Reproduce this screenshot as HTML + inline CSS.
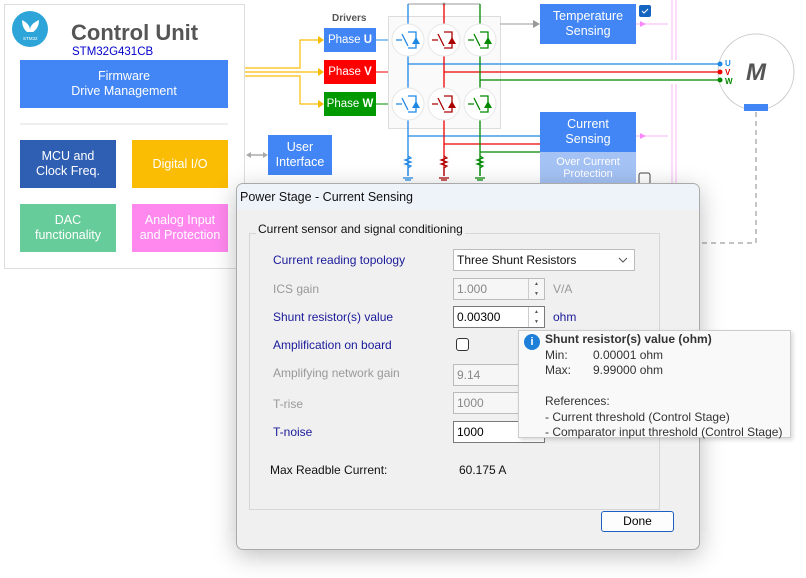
<!DOCTYPE html>
<html><head><meta charset="utf-8"><style>
*{margin:0;padding:0;box-sizing:border-box}
body{width:806px;height:578px;overflow:hidden;background:#fff;font-family:"Liberation Sans",sans-serif;position:relative}
.a{position:absolute}
.bx{position:absolute;color:#fff;display:flex;align-items:center;justify-content:center;text-align:center;font-size:12.5px;line-height:15px}
.lbl{position:absolute;font-size:12px;color:#1a1a9a}
.dis{color:#999}
.in{position:absolute;background:#fff;border:1px solid #7a7a7a;font-size:12px;padding:3px 3px;height:22px}
.in.d{border-color:#bbb;color:#888;background:#f6f6f6}
.sp{position:absolute;right:0;top:0;width:16px;height:20px;border-left:1px solid #ccc;font-size:5px;color:#555;text-align:center;line-height:10px}
</style></head><body>
<svg class="a" style="left:0;top:0" width="806" height="578">
<rect x="4.5" y="4.5" width="240" height="264" fill="#fff" stroke="#ddd"/>
<line x1="20" y1="124" x2="228" y2="124" stroke="#ddd"/>
<circle cx="30" cy="29" r="18" fill="#2ea5d9"/>
<path d="M22 20 q8 4 8 10 q0 -6 9 -10 q0 8 -6 12 h-6 q-5 -4 -5 -12z" fill="#fff"/>
<text x="23" y="40" font-size="4.5" fill="#fff" font-family="Liberation Sans">STM32</text>
<g stroke="#fbbc04" stroke-width="1.2" fill="none">
<path d="M245 68 H300 V40 H318"/><path d="M245 72 H318"/><path d="M245 76 H300 V104 H318"/>
</g>
<path d="M318 36 l6 4 l-6 4z M318 68 l6 4 l-6 4z M318 100 l6 4 l-6 4z" fill="#fbbc04"/>
<path d="M249 155 H265" stroke="#aaa" stroke-width="1.5"/><path d="M246 155 l5 -3 v6z M268 155 l-5 -3 v6z" fill="#aaa"/>
<line x1="376" y1="40" x2="390" y2="40" stroke="#1e88e5"/>
<line x1="376" y1="72" x2="390" y2="72" stroke="#e00"/>
<line x1="376" y1="104" x2="390" y2="104" stroke="#080"/>
<rect x="388.5" y="16.5" width="112" height="112" fill="#fafafa" stroke="#ddd"/>
<path d="M408 4 H480 M444 4 V4" stroke="#999"/>
<circle cx="444" cy="4" r="1.5" fill="#999"/>
<path d="M500 24 H533" stroke="#999"/><path d="M533 20 l7 4 l-7 4z" fill="#999"/>
<g stroke-width="1.3" fill="none">
<path d="M408 4 V176 M408 64 H720 M408 136 H540" stroke="#1e88e5"/>
<path d="M444 4 V176 M444 72 H720 M444 144 H540" stroke="#e00"/>
<path d="M480 4 V176 M480 80 H720 M480 152 H540" stroke="#080"/>
</g>
<g fill="#fff" stroke="#e6e6e6">
<circle cx="408" cy="40" r="16"/><circle cx="444" cy="40" r="16"/><circle cx="480" cy="40" r="16"/>
<circle cx="408" cy="104" r="16"/><circle cx="444" cy="104" r="16"/><circle cx="480" cy="104" r="16"/>
</g>
<g fill="none" stroke-width="1.3">
<g stroke="#1e88e5"><path d="M396 40 h6 M402 34 l6 12 M408 32 h8 v16 h-8"/><path d="M396 104 h6 M402 98 l6 12 M408 96 h8 v16 h-8"/></g>
<g stroke="#a00"><path d="M432 40 h6 M438 34 l6 12 M444 32 h8 v16 h-8"/><path d="M432 104 h6 M438 98 l6 12 M444 96 h8 v16 h-8"/></g>
<g stroke="#080"><path d="M468 40 h6 M474 34 l6 12 M480 32 h8 v16 h-8"/><path d="M468 104 h6 M474 98 l6 12 M480 96 h8 v16 h-8"/></g>
</g>
<path d="M412 44 l4 -7 l4 7z M412 108 l4 -7 l4 7z" fill="#1e88e5"/>
<path d="M448 44 l4 -7 l4 7z M448 108 l4 -7 l4 7z" fill="#a00"/>
<path d="M484 44 l4 -7 l4 7z M484 108 l4 -7 l4 7z" fill="#080"/>
<g fill="none" stroke-width="1.2">
<path d="M408 156 l3 2 l-6 2 l6 2 l-6 2 l6 2 l-3 2 v8 M403 178 h10 M405 180 h6" stroke="#1e88e5"/>
<path d="M444 156 l3 2 l-6 2 l6 2 l-6 2 l6 2 l-3 2 v8 M439 178 h10 M441 180 h6" stroke="#a00"/>
<path d="M480 156 l3 2 l-6 2 l6 2 l-6 2 l6 2 l-3 2 v8 M475 178 h10 M477 180 h6" stroke="#080"/>
</g>
<g stroke="#fbc4f4" stroke-width="1.2" fill="none">
<path d="M672 0 V60 M676 0 V60 M672 84 V190 M676 84 V190 M636 24 H668 M636 136 H668"/>
</g>
<path d="M640 21 l6 3 l-6 3z M640 133 l6 3 l-6 3z" fill="#f8f"/>
<circle cx="756" cy="72" r="38" fill="#fff" stroke="#ccc"/>
<rect x="744" y="104" width="24" height="7" fill="#4285f4"/>
<text x="756" y="80" text-anchor="middle" font-size="24" font-weight="bold" fill="#555" font-style="italic">M</text>
<circle cx="720" cy="64" r="2.5" fill="#1e88e5"/><circle cx="720" cy="72" r="2.5" fill="#e00"/><circle cx="720" cy="80" r="2.5" fill="#080"/>
<text x="725" y="66" font-size="8" font-weight="bold" fill="#1e88e5">U</text>
<text x="725" y="75" font-size="8" font-weight="bold" fill="#e00">V</text>
<text x="725" y="84" font-size="8" font-weight="bold" fill="#080">W</text>
<path d="M756 112 V243 H700" stroke="#888" stroke-dasharray="5 4" fill="none"/>
<rect x="639" y="5" width="12" height="12" rx="2" fill="#1565c0"/><path d="M642 11 l2 2 l4 -4" stroke="#fff" fill="none"/>
<rect x="639" y="173" width="11" height="11" rx="2" fill="#fff" stroke="#444"/>
</svg>
<div class="a" style="left:71px;top:20px;font-size:22px;font-weight:bold;color:#555">Control Unit</div>
<div class="a" style="left:72px;top:46px;font-size:11.5px;color:#00c">STM32G431CB</div>
<div class="bx" style="left:20px;top:60px;width:208px;height:48px;background:#4285f4">Firmware<br>Drive Management</div>
<div class="bx" style="left:20px;top:140px;width:96px;height:48px;background:#2f5fb3">MCU and<br>Clock Freq.</div>
<div class="bx" style="left:132px;top:140px;width:96px;height:48px;background:#fbbc04">Digital I/O</div>
<div class="bx" style="left:20px;top:204px;width:96px;height:48px;background:#66cc99">DAC<br>functionality</div>
<div class="bx" style="left:132px;top:204px;width:96px;height:48px;background:#ff88ee">Analog Input<br>and Protection</div>
<div class="bx" style="left:268px;top:135px;width:64px;height:40px;background:#4285f4">User<br>Interface</div>
<div class="a" style="left:332px;top:13px;font-size:10px;font-weight:bold;color:#555">Drivers</div>
<div class="bx" style="left:324px;top:28px;width:52px;height:24px;background:#4285f4;font-size:11.5px">Phase&nbsp;<b>U</b></div>
<div class="bx" style="left:324px;top:60px;width:52px;height:24px;background:#f00;font-size:11.5px">Phase&nbsp;<b>V</b></div>
<div class="bx" style="left:324px;top:92px;width:52px;height:24px;background:#090;font-size:11.5px">Phase&nbsp;<b>W</b></div>
<div class="bx" style="left:540px;top:4px;width:96px;height:40px;background:#4285f4">Temperature<br>Sensing</div>
<div class="bx" style="left:540px;top:112px;width:96px;height:40px;background:#4285f4">Current<br>Sensing</div>
<div class="bx" style="left:540px;top:152px;width:96px;height:32px;background:#a4c2f4;font-size:11px;line-height:12px">Over Current<br>Protection</div>

<div class="a" style="left:236px;top:183px;width:464px;height:367px;background:#f0f0f0;border:1px solid #aaa;border-radius:7px;box-shadow:0 6px 24px rgba(0,0,0,.25);overflow:hidden">
<div style="height:26px;background:#eef2f9;font-size:12.5px;padding:6px 3px;color:#111">Power Stage - Current Sensing</div>
</div>
<div class="a" style="left:249px;top:233px;width:411px;height:277px;border:1px solid #d6d6d6"></div>
<div class="a" style="left:256px;top:222px;font-size:12px;background:#f0f0f0;padding:0 2px;color:#111">Current sensor and signal conditioning</div>
<div class="lbl" style="left:273px;top:253px">Current reading topology</div>
<div class="lbl dis" style="left:273px;top:282px">ICS gain</div>
<div class="lbl" style="left:273px;top:310px">Shunt resistor(s) value</div>
<div class="lbl" style="left:273px;top:338px">Amplification on board</div>
<div class="lbl dis" style="left:273px;top:366px">Amplifying network gain</div>
<div class="lbl dis" style="left:273px;top:397px">T-rise</div>
<div class="lbl" style="left:273px;top:425px">T-noise</div>
<div class="a" style="left:270px;top:463px;font-size:12px;color:#111">Max Readble Current:</div>
<div class="a" style="left:459px;top:463px;font-size:12px;color:#111">60.175 A</div>
<div class="in" style="left:453px;top:249px;width:182px;border-color:#bbb;color:#111">Three Shunt Resistors<svg style="position:absolute;right:6px;top:7px" width="10" height="6"><path d="M1 1 L5 5 L9 1" stroke="#555" fill="none"/></svg></div>
<div class="in d" style="left:453px;top:278px;width:92px">1.000<div class="sp">▲<br>▼</div></div>
<div class="a" style="left:553px;top:282px;font-size:12px;color:#999">V/A</div>
<div class="in" style="left:453px;top:306px;width:92px">0.00300<div class="sp">▲<br>▼</div></div>
<div class="a" style="left:553px;top:310px;font-size:12px;color:#1a1a9a">ohm</div>
<div class="a" style="left:456px;top:338px;width:13px;height:13px;border:1px solid #333;border-radius:3px;background:#fff"></div>
<div class="in d" style="left:453px;top:364px;width:92px">9.14</div>
<div class="in d" style="left:453px;top:392px;width:92px">1000</div>
<div class="in" style="left:453px;top:421px;width:92px">1000</div>
<div class="a" style="left:601px;top:511px;width:73px;height:21px;border:1px solid #1f5fbf;border-radius:3px;background:#fdfdfd;font-size:12px;text-align:center;line-height:19px">Done</div>
<div class="a" style="left:518px;top:330px;width:273px;height:108px;background:#f9f9f9;border:1px solid #ccc;box-shadow:2px 2px 4px rgba(0,0,0,.15);font-size:12px;color:#333;line-height:15.5px;padding:1px 0 0 26px">
<div class="a" style="left:5px;top:3px;width:16px;height:16px;border-radius:50%;background:#1e7fd8;color:#fff;font-weight:bold;text-align:center;font-size:11px;line-height:16px;padding:0">i</div>
<div style="font-weight:bold">Shunt resistor(s) value (ohm)</div>
<div>Min:<span style="position:absolute;left:74px">0.00001 ohm</span></div>
<div>Max:<span style="position:absolute;left:74px">9.99000 ohm</span></div>
<div>&nbsp;</div>
<div>References:</div>
<div>- Current threshold (Control Stage)</div>
<div>- Comparator input threshold (Control Stage)</div>
</div>
</body></html>
